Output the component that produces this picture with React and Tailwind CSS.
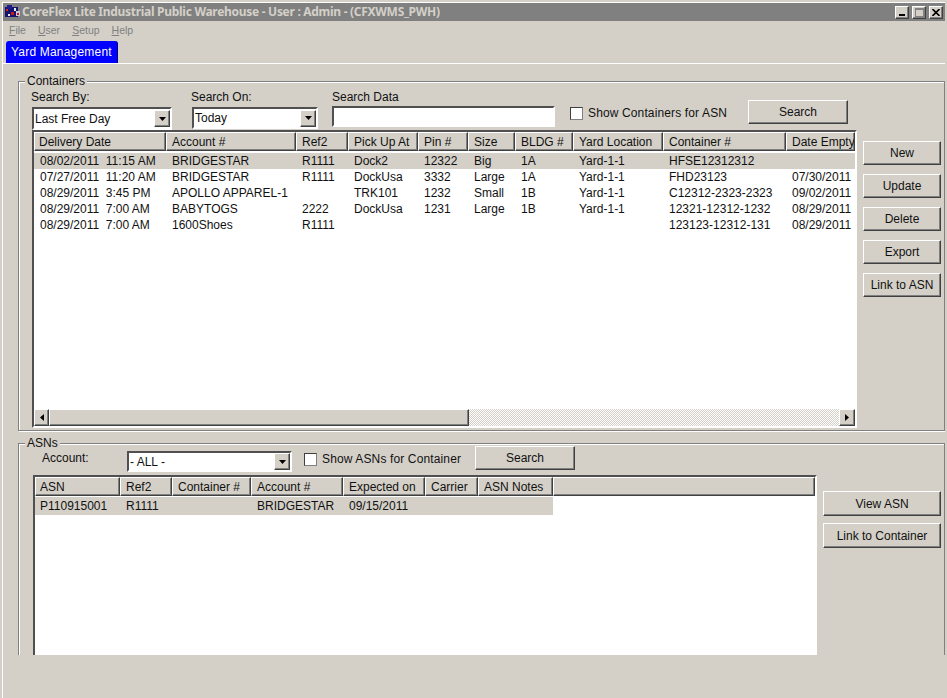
const containerCols = [
	{ label: "Delivery Date", w: "w-[132px]" },
	{ label: "Account #", w: "w-[130px]" },
	{ label: "Ref2", w: "w-[52px]" },
	{ label: "Pick Up At", w: "w-[70px]" },
	{ label: "Pin #", w: "w-[50px]" },
	{ label: "Size", w: "w-[47px]" },
	{ label: "BLDG #", w: "w-[58px]" },
	{ label: "Yard Location", w: "w-[90px]" },
	{ label: "Container #", w: "w-[123px]" },
	{ label: "Date Empty", w: "w-[69px]" },
];

const containerRows = [
	["08/02/2011  11:15 AM", "BRIDGESTAR", "R1111", "Dock2", "12322", "Big", "1A", "Yard-1-1", "HFSE12312312", ""],
	["07/27/2011  11:20 AM", "BRIDGESTAR", "R1111", "DockUsa", "3332", "Large", "1A", "Yard-1-1", "FHD23123", "07/30/2011"],
	["08/29/2011  3:45 PM", "APOLLO APPAREL-1", "", "TRK101", "1232", "Small", "1B", "Yard-1-1", "C12312-2323-2323", "09/02/2011"],
	["08/29/2011  7:00 AM", "BABYTOGS", "2222", "DockUsa", "1231", "Large", "1B", "Yard-1-1", "12321-12312-1232", "08/29/2011"],
	["08/29/2011  7:00 AM", "1600Shoes", "R1111", "", "", "", "", "", "123123-12312-131", "08/29/2011"],
];

const asnCols = [
	{ label: "ASN", w: "w-[85px]" },
	{ label: "Ref2", w: "w-[52px]" },
	{ label: "Container #", w: "w-[79px]" },
	{ label: "Account #", w: "w-[92px]" },
	{ label: "Expected on", w: "w-[82px]" },
	{ label: "Carrier", w: "w-[53px]" },
	{ label: "ASN Notes", w: "w-[75px]" },
];

const asnRow = ["P110915001", "R1111", "", "BRIDGESTAR", "09/15/2011", "", ""];

const raised = "border border-t-white border-l-white border-r-[#404040] border-b-[#404040] shadow-[inset_-1px_-1px_0_#808080]";
const sunken = "border-2 border-t-[#505050] border-l-[#505050] border-r-white border-b-white";

function Arrow({ dir }) {
	const points = { down: "0,0 7,0 3.5,4", left: "4,0 4,7 0,3.5", right: "0,0 0,7 4,3.5" };
	const box = dir === "down" ? "0 0 7 4" : "0 0 4 7";
	return (
		<svg viewBox={box} className={dir === "down" ? "w-[7px] h-[4px]" : "w-[4px] h-[7px]"}>
			<polygon points={points[dir]} fill="#000" />
		</svg>
	);
}

function Btn({ children, className }) {
	return <button className={`${raised} bg-[#d4d0c8] text-[12px] text-[#111] ${className}`}>{children}</button>;
}

function Combo({ value, className }) {
	return (
		<div className={`${sunken} bg-white flex items-center justify-between ${className}`}>
			<span className="pl-[1px] text-[12px] text-[#111]">{value}</span>
			<span className={`${raised} w-[16px] h-[17px] bg-[#d4d0c8] flex items-center justify-center`}>
				<Arrow dir="down" />
			</span>
		</div>
	);
}

function Check({ label, className }) {
	return (
		<label className={`flex items-center gap-[5px] text-[12px] tracking-[0.13px] text-[#111] ${className}`}>
			<span className="w-[13px] h-[13px] bg-white border border-t-[#404040] border-l-[#404040] border-r-[#808080] border-b-[#808080]" />
			{label}
		</label>
	);
}

function HeaderCell({ col }) {
	return (
		<div className={`${raised} ${col.w} shrink-0 h-full pl-[5px] first:pl-[4px] flex items-center whitespace-nowrap overflow-hidden text-[12px] text-[#111]`}>
			{col.label}
		</div>
	);
}

function Row({ cols, row, className }) {
	return (
		<div className={`flex items-center ${className}`}>
			{cols.map((col, i) => (
				<div key={col.label} className={`${col.w} shrink-0 pl-[6px] whitespace-pre overflow-hidden text-[12px] text-[#111]`}>
					{row[i]}
				</div>
			))}
		</div>
	);
}

function ScrollBar() {
	return (
		<div className="flex h-[17px] shrink-0">
			<span className={`${raised} w-[15px] bg-[#d4d0c8] flex items-center justify-center`}>
				<Arrow dir="left" />
			</span>
			<span className={`${raised} w-[420px] bg-[#d4d0c8]`} />
			<span className="flex-1 bg-[repeating-conic-gradient(#d4d0c8_0_25%,#fff_0_50%)] bg-[length:2px_2px]" />
			<span className={`${raised} w-[16px] bg-[#d4d0c8] flex items-center justify-center`}>
				<Arrow dir="right" />
			</span>
		</div>
	);
}

function Group({ title, className, children }) {
	return (
		<fieldset className={`border border-[#808080] shadow-[inset_1px_1px_0_#fff,1px_1px_0_#fff] ${className}`}>
			<legend className="ml-[6px] px-[2px] h-[14px] leading-[14px] bg-[#d4d0c8] text-[12px] text-[#111]">{title}</legend>
			{children}
		</fieldset>
	);
}

function TitleBar() {
	return (
		<div className="h-[18px] shrink-0 bg-[#808080] flex items-center">
			<svg viewBox="0 0 16 14" className="w-[16px] h-[14px] ml-[2px] shrink-0">
				<rect x="0" y="2" width="13" height="10" fill="#14146e" />
				<rect x="2" y="0" width="5" height="4" fill="#1c1c8c" />
				<rect x="6" y="7" width="3" height="3" fill="#d01818" />
				<rect x="1" y="4" width="2" height="2" fill="#e02020" />
				<rect x="3" y="9" width="2" height="2" fill="#e8e8f0" />
				<rect x="9" y="3" width="2" height="3" fill="#e8e8f0" />
				<rect x="11" y="6" width="4" height="5" fill="#c8c8d8" />
				<rect x="12" y="8" width="2" height="2" fill="#d01818" />
			</svg>
			<span className="ml-[1px] font-['Noto_Sans'] font-bold text-[12px] tracking-[-0.29px] text-[#d4d0c8] whitespace-nowrap">
				CoreFlex Lite Industrial Public Warehouse - User : Admin - (CFXWMS_PWH)
			</span>
			<div className="ml-auto flex items-center pr-[2px]">
				<span className={`${raised} w-[14px] h-[13px] bg-[#d4d0c8] flex items-end justify-center pb-[2px]`}>
					<span className="w-[6px] h-[2px] bg-black" />
				</span>
				<span className={`${raised} ml-[3px] w-[14px] h-[13px] bg-[#d4d0c8] flex items-center justify-center`}>
					<span className="w-[9px] h-[9px] border border-t-2 border-[#808080]" />
				</span>
				<span className={`${raised} ml-[3px] w-[14px] h-[13px] bg-[#d4d0c8] flex items-center justify-center`}>
					<svg viewBox="0 0 8 7" className="w-[8px] h-[7px]">
						<path d="M0.5 0 L7.5 7 M7.5 0 L0.5 7" stroke="#000" strokeWidth="1.6" />
					</svg>
				</span>
			</div>
		</div>
	);
}

function MenuItem({ name }) {
	return (
		<span>
			<span className="underline">{name[0]}</span>
			{name.slice(1)}
		</span>
	);
}

export default function App() {
	return (
		<div className="w-[947px] h-[698px] overflow-hidden bg-[#d4d0c8] pt-[2px] pl-[2px] pr-[2px] font-['Liberation_Sans',Arial,sans-serif]">
			<div className="h-full border-t border-l border-white flex flex-col">
				<TitleBar />

				{/* Menu */}
				<div className="h-[20px] shrink-0 flex items-center gap-[12px] pl-[6px] text-[10.5px] text-[#808080]">
					{["File", "User", "Setup", "Help"].map((m) => (
						<MenuItem key={m} name={m} />
					))}
				</div>

				{/* Tab */}
				<div className="h-[22px] shrink-0 pl-[3px]">
					<div className="w-[112px] h-full bg-[#0000ff] rounded-t-[3px] border-r border-[#000080] pl-[5px] flex items-center text-[12px] tracking-[0.2px] text-white whitespace-nowrap">
						Yard Management
					</div>
				</div>

				{/* Tab pane, cut off at the bottom like the original */}
				<div className="flex-1 border-t border-white">
					<div className="h-[591px] overflow-hidden pt-[10px] pl-[15px] flex flex-col gap-[5px]">
						<Group title="Containers" className="h-[357px] shrink-0">
							<div className="pl-[13px]">
								<div className="flex items-start h-[42px] pt-[2px]">
									<div className="w-[160px] shrink-0">
										<div className="-ml-[1px] h-[14px] leading-[14px] text-[12px] text-[#111]">Search By:</div>
										<Combo value="Last Free Day" className="mt-[3px] w-[140px] h-[23px]" />
									</div>
									<div className="w-[140px] shrink-0">
										<div className="-ml-[1px] h-[14px] leading-[14px] text-[12px] text-[#111]">Search On:</div>
										<Combo value="Today" className="mt-[3px] w-[126px] h-[22px]" />
									</div>
									<div className="w-[238px] shrink-0">
										<div className="h-[14px] leading-[14px] text-[12px] text-[#111]">Search Data</div>
										<div className={`${sunken} mt-[2px] w-[223px] h-[21px] bg-white`} />
									</div>
									<Check label="Show Containers for ASN" className="w-[178px] shrink-0 mt-[14px]" />
									<Btn className="mt-[10px] w-[100px] h-[24px] shrink-0">Search</Btn>
								</div>

								<div className="flex">
									<div className={`${sunken} w-[825px] h-[298px] shrink-0 flex flex-col bg-white`}>
										<div className="flex h-[19px] shrink-0 overflow-hidden bg-[#d4d0c8]">
											{containerCols.map((col) => (
												<HeaderCell key={col.label} col={col} />
											))}
										</div>
										<div className="flex-1 pt-[2px]">
											{containerRows.map((row, i) => (
												<Row key={i} cols={containerCols} row={row} className={i === 0 ? "h-[16px] bg-[#d4d0c8]" : "h-[16px]"} />
											))}
										</div>
										<ScrollBar />
									</div>
									<div className="ml-[6px] pt-[11px] flex flex-col gap-[9px]">
										{["New", "Update", "Delete", "Export", "Link to ASN"].map((b) => (
											<Btn key={b} className="w-[78px] h-[24px]">
												{b}
											</Btn>
										))}
									</div>
								</div>
							</div>
						</Group>

						<Group title="ASNs" className="h-[300px] shrink-0">
							<div className="pl-[14px]">
								<div className="flex items-start h-[25px]">
									<div className="w-[94px] shrink-0 pl-[9px] pt-[1px] h-[15px] leading-[14px] text-[12px] text-[#111]">Account:</div>
									<Combo value="- ALL -" className="mt-[1px] w-[165px] h-[21px] shrink-0" />
									<Check label="Show ASNs for Container" className="ml-[12px] w-[171px] shrink-0" />
									<Btn className="-mt-[4px] w-[100px] h-[24px] shrink-0">Search</Btn>
								</div>

								<div className="flex">
									<div className={`${sunken} w-[784px] h-[260px] shrink-0 bg-white`}>
										<div className="flex h-[19px] overflow-hidden bg-[#d4d0c8]">
											{asnCols.map((col) => (
												<HeaderCell key={col.label} col={col} />
											))}
											<div className={`${raised} flex-1`} />
										</div>
										<Row cols={asnCols} row={asnRow} className="mt-[1px] w-[518px] h-[18px] bg-[#d4d0c8] [&>*:first-child]:pl-[5px]" />
									</div>
									<div className="ml-[6px] pt-[16px] flex flex-col gap-[7px]">
										{["View ASN", "Link to Container"].map((b) => (
											<Btn key={b} className="w-[118px] h-[25px]">
												{b}
											</Btn>
										))}
									</div>
								</div>
							</div>
						</Group>
					</div>
				</div>
			</div>
		</div>
	);
}
